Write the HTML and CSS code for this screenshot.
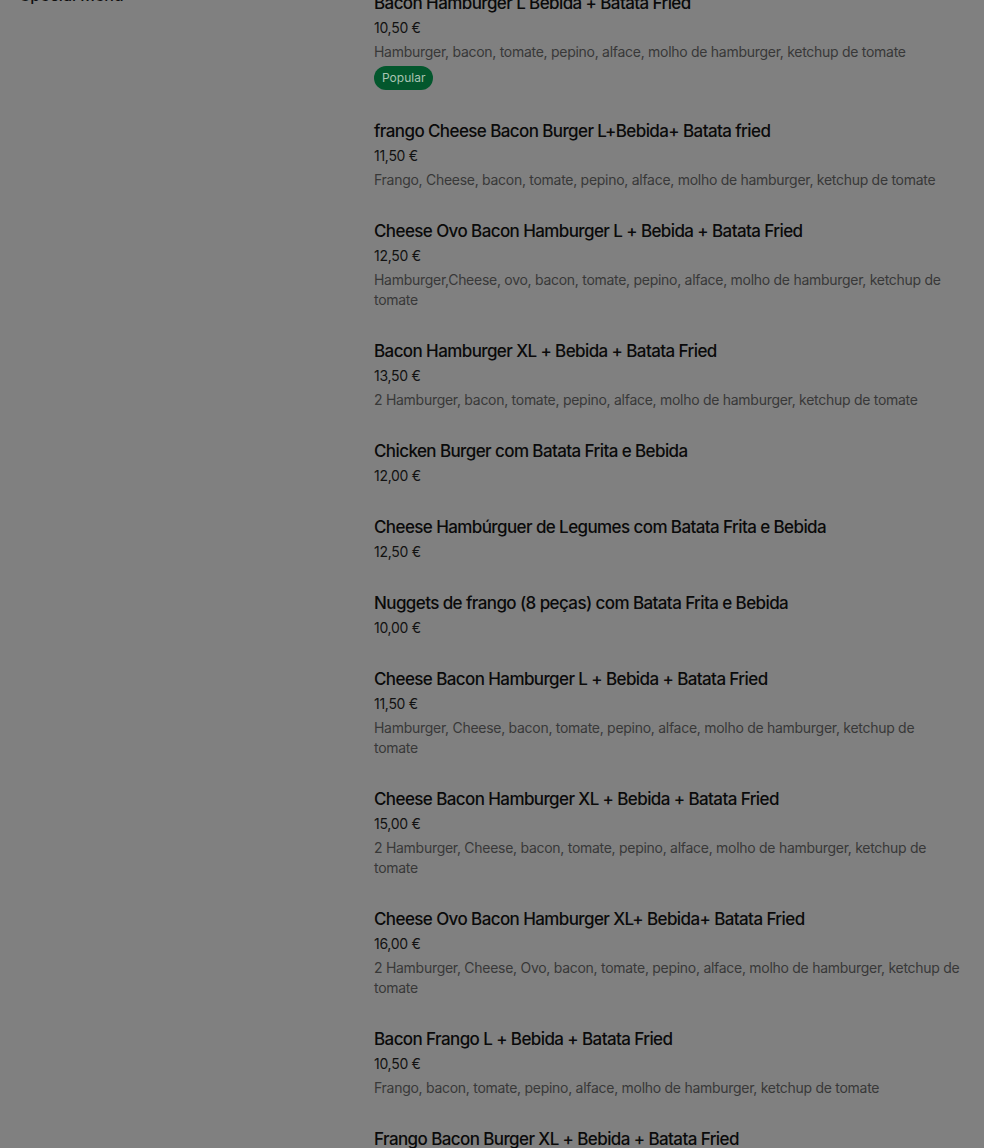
FILE: index.html
```html
<!DOCTYPE html>
<html lang="pt">
<head>
    <meta charset="UTF-8">
    <meta name="viewport" content="width=device-width, initial-scale=1.0">
    <title>Special Menu</title>
    <link rel="stylesheet" href="styles.css">
</head>
<body>
    <div class="page">
        <aside class="sidebar">
            <h2 class="sidebar-title">Special Menu</h2>
        </aside>

        <ul class="menu-list">
            <li class="menu-item">
                <h3 class="item-name">Bacon Hamburger L Bebida + Batata Fried</h3>
                <div class="item-price">10,50 €</div>
                <p class="item-desc">Hamburger, bacon, tomate, pepino, alface, molho de hamburger, ketchup de tomate</p>
                <span class="item-badge">Popular</span>
            </li>
            <li class="menu-item">
                <h3 class="item-name">frango Cheese Bacon Burger L+Bebida+ Batata fried</h3>
                <div class="item-price">11,50 €</div>
                <p class="item-desc">Frango, Cheese, bacon, tomate, pepino, alface, molho de hamburger, ketchup de tomate</p>
            </li>
            <li class="menu-item">
                <h3 class="item-name">Cheese Ovo Bacon Hamburger L + Bebida + Batata Fried</h3>
                <div class="item-price">12,50 €</div>
                <p class="item-desc">Hamburger,Cheese, ovo, bacon, tomate, pepino, alface, molho de hamburger, ketchup de tomate</p>
            </li>
            <li class="menu-item">
                <h3 class="item-name">Bacon Hamburger XL + Bebida + Batata Fried</h3>
                <div class="item-price">13,50 €</div>
                <p class="item-desc">2 Hamburger, bacon, tomate, pepino, alface, molho de hamburger, ketchup de tomate</p>
            </li>
            <li class="menu-item">
                <h3 class="item-name">Chicken Burger com Batata Frita e Bebida</h3>
                <div class="item-price">12,00 €</div>
            </li>
            <li class="menu-item">
                <h3 class="item-name">Cheese Hambúrguer de Legumes com Batata Frita e Bebida</h3>
                <div class="item-price">12,50 €</div>
            </li>
            <li class="menu-item">
                <h3 class="item-name">Nuggets de frango (8 peças) com Batata Frita e Bebida</h3>
                <div class="item-price">10,00 €</div>
            </li>
            <li class="menu-item">
                <h3 class="item-name">Cheese Bacon Hamburger L + Bebida + Batata Fried</h3>
                <div class="item-price">11,50 €</div>
                <p class="item-desc">Hamburger, Cheese, bacon, tomate, pepino, alface, molho de hamburger, ketchup de tomate</p>
            </li>
            <li class="menu-item">
                <h3 class="item-name">Cheese Bacon Hamburger XL + Bebida + Batata Fried</h3>
                <div class="item-price">15,00 €</div>
                <p class="item-desc">2 Hamburger, Cheese, bacon, tomate, pepino, alface, molho de hamburger, ketchup de tomate</p>
            </li>
            <li class="menu-item">
                <h3 class="item-name">Cheese Ovo Bacon Hamburger XL+ Bebida+ Batata Fried</h3>
                <div class="item-price">16,00 €</div>
                <p class="item-desc">2 Hamburger, Cheese, Ovo, bacon, tomate, pepino, alface, molho de hamburger, ketchup de tomate</p>
            </li>
            <li class="menu-item">
                <h3 class="item-name">Bacon Frango L + Bebida + Batata Fried</h3>
                <div class="item-price">10,50 €</div>
                <p class="item-desc">Frango, bacon, tomate, pepino, alface, molho de hamburger, ketchup de tomate</p>
            </li>
            <li class="menu-item">
                <h3 class="item-name">Frango Bacon Burger XL + Bebida + Batata Fried</h3>
                <div class="item-price">13,50 €</div>
                <p class="item-desc">2 Frango, bacon, tomate, pepino, alface, molho de hamburger, ketchup de tomate</p>
            </li>
        </ul>
    </div>
</body>
</html>
```

FILE: styles.css
```css
* {
    margin: 0;
    padding: 0;
    box-sizing: border-box;
}

body {
    font-family: 'Inter', 'Liberation Sans', sans-serif;
    background: #808080;
    color: #0f0f0f;
    overflow: hidden;
}

.page {
    display: grid;
    grid-template-columns: 354px 1fr;
    padding: 0 24px 0 20px;
    margin-top: -9px;
}

.sidebar-title {
    font-size: 16px;
    font-weight: 500;
    line-height: 24px;
    margin-top: -8px;
    color: #0f0f0f;
}

.menu-list {
    list-style: none;
}

.menu-item {
    display: flex;
    flex-direction: column;
    align-items: flex-start;
    margin-bottom: 29px;
}

.item-name {
    font-size: 17px;
    font-weight: 500;
    line-height: 24px;
    letter-spacing: -0.035em;
    color: #0a0a0a;
}

.item-price {
    margin-top: 3px;
    font-size: 14px;
    line-height: 20px;
    letter-spacing: -0.02em;
    color: #121212;
}

.item-desc {
    margin-top: 4px;
    font-size: 14px;
    line-height: 20px;
    letter-spacing: -0.02em;
    color: #383838;
}

.item-badge {
    margin-top: 4px;
    height: 24px;
    padding: 0 8px;
    border-radius: 12px;
    background: #03572d;
    color: #a8c4b2;
    font-size: 12px;
    line-height: 24px;
}
```
